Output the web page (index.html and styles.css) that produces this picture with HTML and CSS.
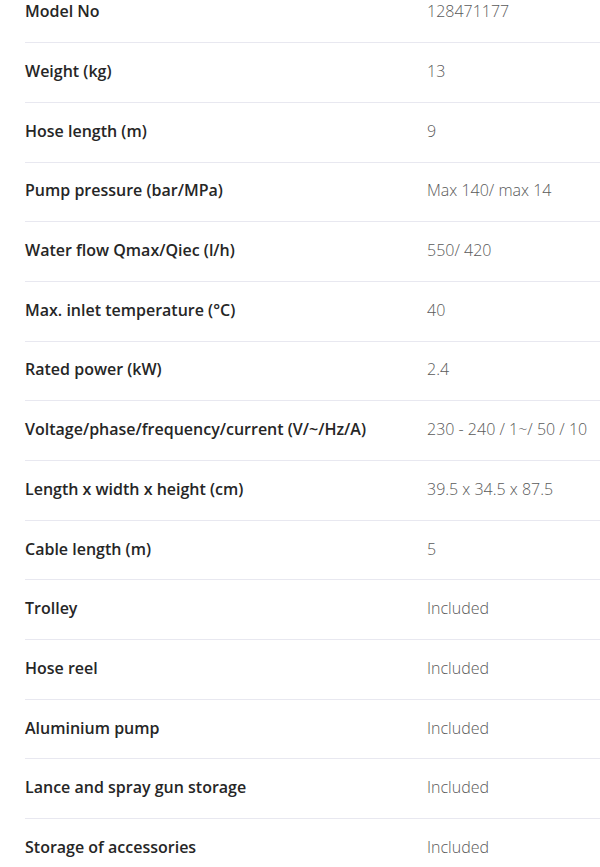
FILE: index.html
```html
<!DOCTYPE html>
<html>
<head>
<meta charset="utf-8">
<link rel="stylesheet" href="styles.css">
</head>
<body>
<table class="specs">
<tbody>
<tr><th>Model No</th><td>128471177</td></tr>
<tr><th>Weight (kg)</th><td>13</td></tr>
<tr><th>Hose length (m)</th><td>9</td></tr>
<tr><th>Pump pressure (bar/MPa)</th><td>Max 140/ max 14</td></tr>
<tr><th>Water flow Qmax/Qiec (l/h)</th><td>550/ 420</td></tr>
<tr><th>Max. inlet temperature (°C)</th><td>40</td></tr>
<tr><th>Rated power (kW)</th><td>2.4</td></tr>
<tr><th>Voltage/phase/frequency/current (V/~/Hz/A)</th><td>230 - 240 / 1~/ 50 / 10</td></tr>
<tr><th>Length x width x height (cm)</th><td>39.5 x 34.5 x 87.5</td></tr>
<tr><th>Cable length (m)</th><td>5</td></tr>
<tr><th>Trolley</th><td>Included</td></tr>
<tr><th>Hose reel</th><td>Included</td></tr>
<tr><th>Aluminium pump</th><td>Included</td></tr>
<tr><th>Lance and spray gun storage</th><td>Included</td></tr>
<tr><th>Storage of accessories</th><td>Included</td></tr>
</tbody>
</table>
</body>
</html>
```
FILE: styles.css
```css
html, body {
  margin: 0;
  padding: 0;
  background: #ffffff;
}
body {
  font-family: "Open Sans", "Segoe UI", "DejaVu Sans", sans-serif;
  font-size: 16px;
}
.specs {
  border-collapse: collapse;
  margin: -17px 0 0 25px;
  width: 575px;
}
.specs tr {
  height: 59.7px;
  border-bottom: 1.5px solid #e8e8f0;
}
.specs th {
  text-align: left;
  font-weight: 600;
  color: #262626;
  padding: 0 0 3px 0;
  width: 402px;
  vertical-align: middle;
}
.specs td {
  font-weight: 300;
  color: #5a5a5a;
  padding: 0 0 3px 0;
  vertical-align: middle;
}
```
